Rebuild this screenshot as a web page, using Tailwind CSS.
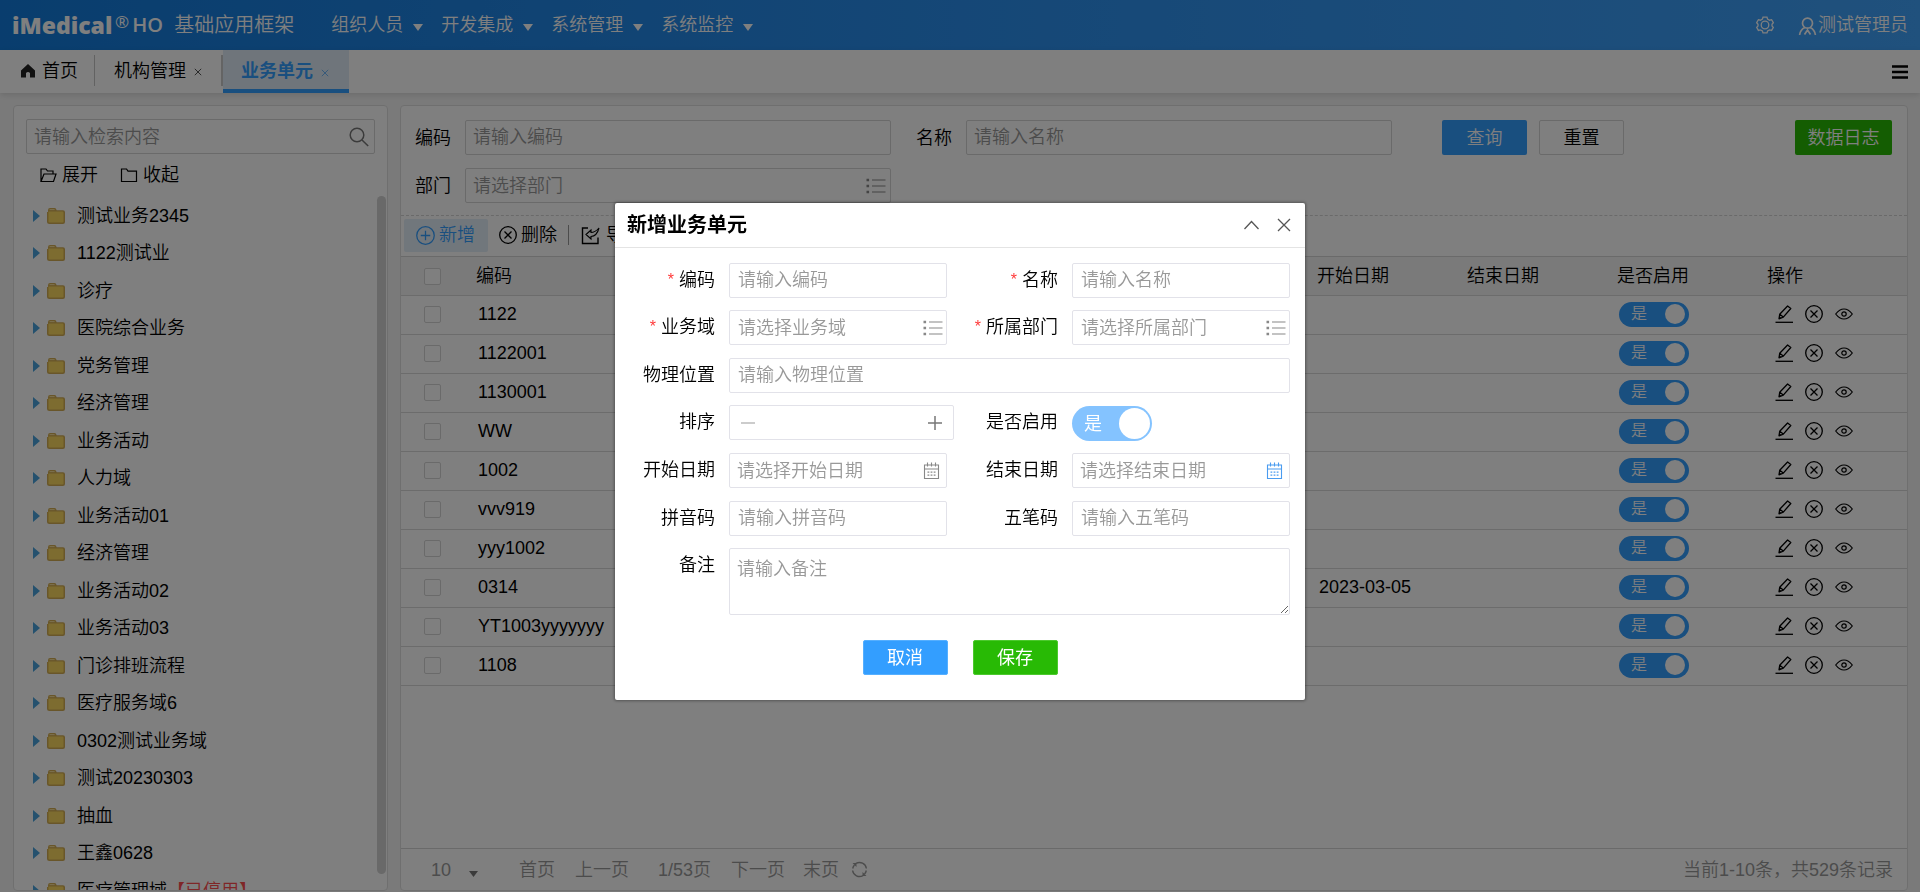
<!DOCTYPE html>
<html lang="zh-CN">
<head>
<meta charset="utf-8">
<title>业务单元</title>
<script src="https://cdn.jsdelivr.net/npm/@tailwindcss/browser@4"></script>
</head>
<body class="h-screen overflow-hidden bg-[#f5f5f5] font-['Liberation_Sans','Noto_Sans_CJK_SC',sans-serif] text-[18px] leading-[26px] font-[350] text-black">

<svg class="hidden" aria-hidden="true">
  <symbol id="i-folder-open" viewBox="0 0 18 18"><path d="M2 15.500V3h5l1.500 2H14v3M2 15.500 5 8h12l-2.500 7.500z" fill="none" stroke="currentColor" stroke-width="1.200"/></symbol>
  <symbol id="i-folder" viewBox="0 0 18 18"><path d="M1.500 3h5L8 5.200h8.500v10.300h-15z" fill="none" stroke="currentColor" stroke-width="1.200"/></symbol>
  <symbol id="i-node" viewBox="0 0 20 18"><path d="M2 5V3.200Q2 1 4 1h4.500q1.200 0 1.700 1.200l.5 1.100H17q2 0 2 2V15q0 2-2 2H3.500Q1 17 1 14.500V5z" fill="#d2ad54"/><path d="M2.500 4.600h13.800q1.200 0 1.200 1.200v8.400q0 1.300-1.200 1.300H3.600q-1.100 0-1.100-1.300z" fill="#fbd860"/><path d="M3.600 2.600h5" stroke="#f8e3a0" stroke-width="1"/></symbol>
  <symbol id="i-list" viewBox="0 0 20 16"><path d="M6 2h13.500M6 8h13.500M6 14h13.500" stroke="currentColor" stroke-width="1.200"/><path d="M.5.800h2.600v2.400H.5zM.5 6.800h2.600v2.400H.5zM.5 12.800h2.600v2.400H.5z" fill="currentColor"/></symbol>
  <symbol id="i-cal" viewBox="0 0 18 18"><path d="M1.500 3h14v13.500h-14zM1.500 7h14M4.500.5v4M8.500.5v4M12.500.5v4" fill="none" stroke="currentColor" stroke-width="1.100"/><path d="M4.500 10.200h8M4.500 13.200h8" stroke="currentColor" stroke-width="1.300" stroke-dasharray="1.800 1.300"/></symbol>
  <symbol id="i-edit" viewBox="0 0 18 18"><path d="M.5 17.300H18" stroke="currentColor" stroke-width="1.300"/><path d="M4 13.800 4.700 9.300 12.600 1l3.200 2.500-7.500 8.600zM4.700 9.300l3.600 2.800M4 13.800l1.200-2" fill="none" stroke="currentColor" stroke-width="1.300" stroke-linejoin="round"/></symbol>
  <symbol id="i-x" viewBox="0 0 18 18"><circle cx="9" cy="9" r="8.300" fill="none" stroke="currentColor" stroke-width="1.300"/><path d="m5.500 5.500 7 7m0-7-7 7" stroke="currentColor" stroke-width="1.300"/></symbol>
  <symbol id="i-eye" viewBox="0 0 18 18"><path d="M.700 9Q4.500 4 9 4t8.300 5q-3.800 5-8.300 5T.700 9z" fill="none" stroke="currentColor" stroke-width="1.200"/><circle cx="9" cy="9" r="2.200" fill="none" stroke="currentColor" stroke-width="1.200"/></symbol>
</svg>

<div class="flex h-full flex-col">
  <header class="flex h-[50px] shrink-0 items-center bg-linear-to-r from-[#127bdc] via-[#2a8fee] to-[#40a2fa] pr-3 pl-[12px] text-white">
    <div class="flex items-center font-['Open_Sans',sans-serif]">
      <span class="w-[102px] text-[23px] font-extrabold">iMedical</span>
      <span class="ml-px self-start text-[17px] leading-[20px] font-normal">®</span>
      <span class="ml-[3px] w-[30px] text-[20px] font-semibold">HO</span>
    </div>
    <h1 class="ml-3 w-[120px] text-[20px] whitespace-nowrap">基础应用框架</h1>
    <nav class="ml-[37px] flex gap-[18px]" id="nav"></nav>
    <button class="ml-auto" aria-label="设置"><svg class="size-[18px]" viewBox="0 0 18 18" fill="none" stroke="currentColor" stroke-width="1.300"><path d="M7 1.200h4l.6 1.900 2 1.100 2-.5 1.700 3-1.300 1.500v1.700l1.300 1.500-1.700 3-2-.5-2 1.100-.6 1.900H7l-.6-1.900-2-1.100-2 .5-1.700-3L2 9.900V8.200L.700 6.700l1.700-3 2 .5 2-1.100z"/><circle cx="9" cy="9" r="3.800"/></svg></button>
    <button class="ml-[24px] flex items-center gap-px whitespace-nowrap"><svg class="mt-[2px] size-[19px]" viewBox="0 0 19 19" fill="none" stroke="currentColor" stroke-width="1.700"><circle cx="9.500" cy="6.200" r="5"/><path d="M7 10.500C3.500 12 2 14.500 1.600 18M12 10.500c3.500 1.500 5 4 5.400 7.500M6.500 17.500l3-4.500 3 4.500"/></svg>测试管理员</button>
  </header>

  <nav class="flex h-[43px] shrink-0 items-stretch bg-white shadow-[0_2px_6px_rgba(0,0,0,0.12)]">
    <a href="#" class="mt-[5px] mb-[7px] flex items-center gap-[6px] border-r border-[#c4c4c4] pr-4 pl-[20px]"><svg class="size-4" viewBox="0 0 16 16"><path d="M8 1 1 7.500V14.500h5V10q2-2 4 0v4.500h5V7.500z" fill="#222"/></svg>首页</a>
    <a href="#" class="flex items-center gap-2 pb-[2px] pl-[19px]">机构管理<svg class="mt-[3px] size-2" viewBox="0 0 8 8"><path d="m.8.800 6.400 6.400m0-6.400L.8 7.200" stroke="#555"/></svg><span class="ml-[11px] h-[31px] w-[2px] bg-[#c8c8c8]"></span></a>
    <a href="#" class="flex items-center gap-2 border-b-4 border-[#339eff] bg-[#dfebf6] pr-5 pl-[18px] font-bold text-[#339eff]"><span class="pt-[2px]">业务单元</span><svg class="mt-[6px] size-2" viewBox="0 0 8 8"><path d="m.8.800 6.400 6.400m0-6.400L.8 7.200" stroke="#6fb4f5"/></svg></a>
    <button class="mr-3 ml-auto" aria-label="菜单"><svg class="h-[14px] w-4" viewBox="0 0 16 14"><path d="M0 1.500h16M0 7h16M0 12.500h16" stroke="#000" stroke-width="2.400"/></svg></button>
  </nav>

  <main class="flex min-h-0 flex-1 gap-3 pt-3 pr-3 pb-px pl-[13px]">
    <aside class="flex w-[375px] shrink-0 flex-col rounded border border-[#dedede] bg-white">
      <div class="mx-3 mt-[13px] flex h-[35px] items-center rounded-xs border border-[#d4d4d4] pr-[5px] pl-[7px]">
        <input aria-label="检索" placeholder="请输入检索内容" class="min-w-0 flex-1 outline-none placeholder:text-[#999]">
        <button aria-label="搜索"><svg class="size-5" viewBox="0 0 20 20" fill="none" stroke="#777" stroke-width="1.500"><circle cx="8" cy="8" r="6.800"/><path d="m13 13 6.200 6"/></svg></button>
      </div>
      <div class="mt-2 flex gap-[22px] pl-[25px]">
        <button class="flex items-center gap-[5px]"><svg class="size-[18px]"><use href="#i-folder-open"/></svg>展开</button>
        <button class="flex items-center gap-[5px]"><svg class="size-[18px]"><use href="#i-folder"/></svg>收起</button>
      </div>
      <div class="mt-2 flex min-h-0 flex-1 gap-1 overflow-hidden">
        <ul id="tree" class="flex-1 overflow-hidden pt-px pl-[19px]"></ul>
        <div class="mr-px mb-4 w-[9px] rounded-full bg-[#d2d2d2]"></div>
      </div>
    </aside>

    <section class="flex min-w-0 flex-1 flex-col rounded border border-[#dedede] bg-white">
      <form class="flex flex-col gap-[13px] border-b border-dashed border-[#d4d4d4] pt-[14px] pr-[15px] pb-3 pl-[14px]">
        <div class="flex items-center">
          <label for="q-code" class="pr-[14px]">编码</label>
          <input id="q-code" placeholder="请输入编码" class="h-[35px] w-[426px] rounded-xs border border-[#d4d4d4] px-[7px] outline-none placeholder:text-[#999]">
          <label for="q-name" class="pr-[14px] pl-[25px]">名称</label>
          <input id="q-name" placeholder="请输入名称" class="h-[35px] w-[426px] rounded-xs border border-[#d4d4d4] px-[7px] outline-none placeholder:text-[#999]">
          <button type="button" class="ml-[50px] h-[35px] w-[85px] rounded-xs bg-[#339eff] text-white">查询</button>
          <button type="button" class="ml-3 h-[35px] w-[85px] rounded-xs border border-[#d4d4d4]">重置</button>
          <button type="button" class="ml-auto h-[35px] w-[97px] rounded-xs bg-[#28ba05] whitespace-nowrap text-white">数据日志</button>
        </div>
        <div class="flex items-center">
          <label for="q-dept" class="pr-[14px]">部门</label>
          <div class="flex h-[35px] w-[426px] items-center rounded-xs border border-[#d4d4d4] pr-1 pl-[7px]">
            <input id="q-dept" placeholder="请选择部门" class="min-w-0 flex-1 outline-none placeholder:text-[#999]">
            <button type="button" aria-label="选择部门" class="text-[#888]"><svg class="h-4 w-5"><use href="#i-list"/></svg></button>
          </div>
        </div>
      </form>
      <div class="flex h-10 shrink-0 items-center pb-[2px] pl-[3px]">
        <button class="flex h-[33px] w-[84px] items-center gap-1 rounded-xs bg-[#e3eef8] pl-3 text-[#339eff]"><svg class="size-[19px]" viewBox="0 0 18 18" fill="none" stroke="currentColor" stroke-width="1.200"><circle cx="9" cy="9" r="8.300"/><path d="M4.500 9h9M9 4.500v9"/></svg>新增</button>
        <button class="ml-[11px] flex items-center gap-1"><svg class="size-[18px]"><use href="#i-x"/></svg>删除</button>
        <span class="mr-3 ml-[11px] h-5 w-px bg-[#999]"></span>
        <button class="flex items-center gap-[6px]"><svg class="size-[19px]" viewBox="0 0 19 19" fill="none" stroke="currentColor" stroke-width="1.400"><path d="M7 2H1.500v15.500H17V11.500"/><path d="M5 8.500 10 4v2.500q4 0 8-4.500-2 8-8 8.500V13z" stroke-width="1.100"/></svg>导出</button>
      </div>
      <table class="w-full table-fixed border-separate border-spacing-0 border-t border-[#d4d4d4] text-left">
        <colgroup><col class="w-[65px]"><col class="w-[150px]"><col><col class="w-[150px]"><col class="w-[150px]"><col class="w-[150px]"><col class="w-[150px]"></colgroup>
        <thead><tr class="bg-[#f5f5f5] [&>th]:h-[39px] [&>th]:border-b [&>th]:border-[#d9d9d9] [&>th]:py-0 [&>th]:pl-[10px] [&>th]:font-[350]">
          <th><input type="checkbox" aria-label="全选" class="ml-[13px] block size-[17px] appearance-none rounded-xs border border-[#d4d4d4] bg-white"></th>
          <th>编码</th><th></th><th>开始日期</th><th>结束日期</th><th>是否启用</th><th>操作</th>
        </tr></thead>
        <tbody id="rows"></tbody>
      </table>
      <footer class="mt-auto flex h-[42px] shrink-0 items-center border-t border-[#d4d4d4] pr-[14px] pl-[30px] text-[#999]">
        <div class="mr-[41px] flex items-center"><select aria-label="每页条数" class="w-[38px] appearance-none outline-none"><option>10</option></select><svg class="mt-2 h-[6px] w-[9px]" viewBox="0 0 9 6"><path d="M0 0h9L4.500 6z" fill="#777"/></svg></div>
        <button>首页</button><button class="ml-5">上一页</button>
        <span class="ml-[29px]">1/53页</span>
        <button class="ml-5">下一页</button><button class="ml-[18px]">末页</button>
        <button class="ml-3" aria-label="刷新"><svg class="size-[17px]" viewBox="0 0 17 17" fill="none" stroke="currentColor" stroke-width="1.400"><path d="M5 2.400A7 7 0 0 1 15.400 7.500M12 14.600A7 7 0 0 1 1.600 9.500"/><path d="M1.500 2h4v4zM15.500 15h-4v-4z" fill="currentColor" stroke="none"/><path d="M1.700 7.500A7 7 0 0 1 3.500 4M15.300 9.500A7 7 0 0 1 13.500 13"/></svg></button>
        <span class="ml-auto">当前1-10条，共529条记录</span>
      </footer>
    </section>
  </main>
</div>

<div class="fixed inset-0 flex items-start justify-center bg-black/50 pt-[203px]">
  <div role="dialog" aria-labelledby="dlg-title" class="w-[690px] rounded-xs bg-white pb-[25px] shadow-[0_0_3px_1px_rgba(0,0,0,0.35)]">
    <div class="flex h-[45px] items-center border-b border-[#e4e4e4] pr-[13px] pl-3">
      <h2 id="dlg-title" class="text-[20px] font-bold">新增业务单元</h2>
      <button class="ml-auto" aria-label="收起"><svg class="h-4 w-[17px]" viewBox="0 0 17 16"><path d="m1.500 12 7-7.500 7 7.500" fill="none" stroke="#555" stroke-width="1.300"/></svg></button>
      <button class="ml-4" aria-label="关闭"><svg class="size-4" viewBox="0 0 16 16"><path d="m2 2 12 12m0-12L2 14" stroke="#555" stroke-width="1.300"/></svg></button>
    </div>
    <form>
      <div id="fields" class="grid grid-cols-[100px_218px_97px_218px] grid-rows-[35px_36px_35px_36px_36px_35px_67px] items-start gap-x-[14px] gap-y-3 pt-[15px]">
        <label for="f-code" class="flex h-[34px] items-center justify-end gap-[5px] whitespace-nowrap"><span class="text-[16px] text-[#ff3a3a]">*</span>编码</label>
        <input id="f-code" placeholder="请输入编码" class="h-[35px] w-full rounded-xs border border-[#e2e2e9] px-2 outline-none placeholder:text-[#999]">
        <label for="f-name" class="flex h-[34px] items-center justify-end gap-[5px] whitespace-nowrap"><span class="text-[16px] text-[#ff3a3a]">*</span>名称</label>
        <input id="f-name" placeholder="请输入名称" class="h-[35px] w-full rounded-xs border border-[#e2e2e9] px-2 outline-none placeholder:text-[#999]">

        <label for="f-domain" class="flex h-[34px] items-center justify-end gap-[5px] whitespace-nowrap"><span class="text-[16px] text-[#ff3a3a]">*</span>业务域</label>
        <div class="flex h-[35px] items-center rounded-xs border border-[#e2e2e9] pr-[3px] pl-2">
          <input id="f-domain" placeholder="请选择业务域" class="min-w-0 flex-1 outline-none placeholder:text-[#999]">
          <button type="button" aria-label="选择业务域" class="text-[#888]"><svg class="h-4 w-5"><use href="#i-list"/></svg></button>
        </div>
        <label for="f-dept" class="flex h-[34px] items-center justify-end gap-[5px] whitespace-nowrap"><span class="text-[16px] text-[#ff3a3a]">*</span>所属部门</label>
        <div class="flex h-[35px] items-center rounded-xs border border-[#e2e2e9] pr-[3px] pl-2">
          <input id="f-dept" placeholder="请选择所属部门" class="min-w-0 flex-1 outline-none placeholder:text-[#999]">
          <button type="button" aria-label="选择所属部门" class="text-[#888]"><svg class="h-4 w-5"><use href="#i-list"/></svg></button>
        </div>

        <label for="f-place" class="flex h-[34px] items-center justify-end">物理位置</label>
        <input id="f-place" placeholder="请输入物理位置" class="col-span-3 h-[35px] w-full rounded-xs border border-[#e2e2e9] px-2 outline-none placeholder:text-[#999]">

        <label for="f-sort" class="flex h-[34px] items-center justify-end">排序</label>
        <div class="flex h-[35px] w-[225px] items-center rounded-xs border border-[#e2e2e9] px-[11px]">
          <button type="button" aria-label="减少"><svg class="size-[14px]" viewBox="0 0 14 14"><path d="M0 7h14" stroke="#bbb" stroke-width="1.500"/></svg></button>
          <input id="f-sort" class="min-w-0 flex-1 outline-none">
          <button type="button" aria-label="增加"><svg class="size-[14px]" viewBox="0 0 14 14"><path d="M0 7h14M7 0v14" stroke="#777" stroke-width="1.500"/></svg></button>
        </div>
        <label for="f-on" class="flex h-[34px] items-center justify-end">是否启用</label>
        <label class="mt-px flex h-[35px] w-[80px] items-center justify-between rounded-full bg-[#84c3ff] pr-[2px] pl-3 font-normal text-white"><input id="f-on" type="checkbox" checked class="sr-only">是<span class="size-[31px] rounded-full bg-white"></span></label>

        <label for="f-start" class="flex h-[34px] items-center justify-end">开始日期</label>
        <div class="flex h-[35px] items-center rounded-xs border border-[#e2e2e9] pr-[5px] pl-[7px]">
          <input id="f-start" placeholder="请选择开始日期" class="min-w-0 flex-1 outline-none placeholder:text-[#999]">
          <button type="button" aria-label="开始日期日历" class="text-[#888]"><svg class="size-[18px]"><use href="#i-cal"/></svg></button>
        </div>
        <label for="f-end" class="flex h-[34px] items-center justify-end">结束日期</label>
        <div class="flex h-[35px] items-center rounded-xs border border-[#e2e2e9] pr-[5px] pl-[7px]">
          <input id="f-end" placeholder="请选择结束日期" class="min-w-0 flex-1 outline-none placeholder:text-[#999]">
          <button type="button" aria-label="结束日期日历" class="text-[#4a9cf0]"><svg class="size-[18px]"><use href="#i-cal"/></svg></button>
        </div>

        <label for="f-py" class="flex h-[34px] items-center justify-end">拼音码</label>
        <input id="f-py" placeholder="请输入拼音码" class="h-[35px] w-full rounded-xs border border-[#e2e2e9] px-2 outline-none placeholder:text-[#999]">
        <label for="f-wb" class="flex h-[34px] items-center justify-end">五笔码</label>
        <input id="f-wb" placeholder="请输入五笔码" class="h-[35px] w-full rounded-xs border border-[#e2e2e9] px-2 outline-none placeholder:text-[#999]">

        <label for="f-note" class="flex h-[34px] items-center justify-end">备注</label>
        <textarea id="f-note" placeholder="请输入备注" class="col-span-3 h-[67px] w-full rounded-xs border border-[#e2e2e9] px-[7px] py-[7px] outline-none placeholder:text-[#999]"></textarea>
      </div>
      <div class="mt-[25px] flex justify-center gap-[25px]">
        <button type="button" class="h-[35px] w-[85px] rounded-xs border border-[#55afff] bg-[#339eff] font-normal text-white">取消</button>
        <button type="button" class="h-[35px] w-[85px] rounded-xs border border-[#4cc92e] bg-[#28ba05] font-normal text-white">保存</button>
      </div>
    </form>
  </div>
</div>

<script>
const nav = ['组织人员', '开发集成', '系统管理', '系统监控'];
document.getElementById('nav').innerHTML = nav.map(t =>
  `<button class="flex items-center gap-[10px] whitespace-nowrap">${t}<svg class="mt-1 h-[7px] w-[10px]" viewBox="0 0 10 7"><path d="M0 0h10L5 7z" fill="#fff"/></svg></button>`).join('');

const tree = ['测试业务2345', '1122测试业', '诊疗', '医院综合业务', '党务管理', '经济管理', '业务活动', '人力域', '业务活动01', '经济管理', '业务活动02', '业务活动03', '门诊排班流程', '医疗服务域6', '0302测试业务域', '测试20230303', '抽血', '王鑫0628', '医疗管理域'];
document.getElementById('tree').innerHTML = tree.map((t, i) =>
  `<li class="flex items-center whitespace-nowrap odd:h-[37px] even:h-[38px]"><svg class="h-3 w-[7px]" viewBox="0 0 7 12"><path d="M0 0v12l7-6z" fill="#4aa3dc"/></svg><svg class="mr-[11px] ml-[6px] h-[18px] w-5"><use href="#i-node"/></svg>${t}${i === 18 ? '<span class="text-[#ff4d4f]">【已停用】</span>' : ''}</li>`).join('');

const rows = [['1122'], ['1122001'], ['1130001'], ['WW'], ['1002'], ['vvv919'], ['yyy1002'], ['0314', '2023-03-05'], ['YT1003yyyyyyy'], ['1108']];
document.getElementById('rows').innerHTML = rows.map(([code, start = '']) =>
  `<tr class="[&>td]:h-[39px] [&>td]:border-b [&>td]:border-[#d9d9d9] [&>td]:pt-0 [&>td]:pb-[2px] [&>td]:pl-[12px]">
    <td><input type="checkbox" aria-label="选择 ${code}" class="ml-[11px] block size-[17px] appearance-none rounded-xs border border-[#d4d4d4] bg-white"></td>
    <td>${code}</td><td></td><td>${start}</td><td></td>
    <td><label class="flex h-[25px] w-[70px] items-center justify-between rounded-full bg-[#339eff] pr-1 pl-3 text-[16px] text-white"><input type="checkbox" checked class="sr-only">是<span class="size-5 rounded-full bg-white"></span></label></td>
    <td><div class="flex gap-3 pl-[6px]"><button aria-label="编辑"><svg class="size-[18px]"><use href="#i-edit"/></svg></button><button aria-label="删除"><svg class="size-[18px]"><use href="#i-x"/></svg></button><button aria-label="查看"><svg class="size-[18px]"><use href="#i-eye"/></svg></button></div></td>
  </tr>`).join('');
</script>
</body>
</html>
